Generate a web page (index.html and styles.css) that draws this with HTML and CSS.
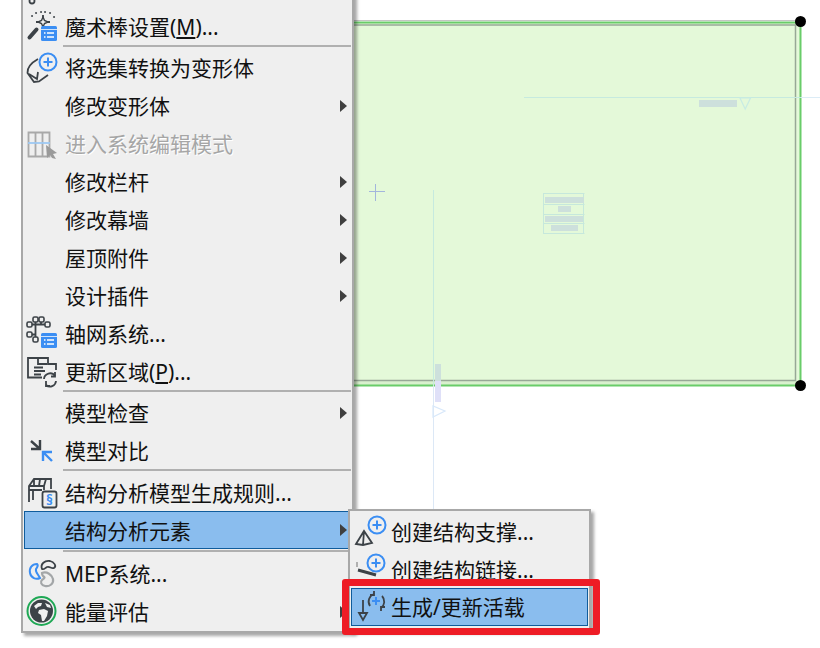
FILE: index.html
```html
<!DOCTYPE html>
<html lang="zh">
<head>
<meta charset="utf-8">
<title>结构分析元素菜单</title>
<link rel="stylesheet" href="styles.css">
</head>
<body>
<div class="stage">
  <svg class="drawing" width="820" height="648" viewBox="0 0 820 648">
    <rect x="350" y="22" width="451" height="364" fill="#e4f9d9"/>
    <rect x="350" y="381" width="446" height="5" fill="#d9f0ce"/>
    <path d="M350 25H795.500V380.500H350" fill="none" stroke="#97a896" stroke-width="1.500"/>
    <path d="M350 20.500H798" fill="none" stroke="#c4c4c4" stroke-width="1"/>
    <path d="M350 22.500H800.500V385.500H350" fill="none" stroke="#69cc69" stroke-width="2"/>
    <circle cx="800.500" cy="21.500" r="5.500" fill="#000"/>
    <circle cx="800.500" cy="385.500" r="5.500" fill="#000"/>
    <path d="M524 97.500H801" stroke="#c6eadf" stroke-width="1"/>
    <path d="M801 97.500H820" stroke="#dcecf6" stroke-width="1"/>
    <rect x="699" y="100" width="38" height="7" fill="#cde0dc"/>
    <path d="M740 98H750.500L745.200 109Z" fill="none" stroke="#c8ece3" stroke-width="1.200"/>
    <path d="M369 191.500H385M375.500 184V201" stroke="#a3b6dc" stroke-width="1"/>
    <path d="M433.500 190V386" stroke="#c6eadf" stroke-width="1"/>
    <path d="M433.500 386V510" stroke="#dce8f6" stroke-width="1"/>
    <rect x="435" y="364" width="6" height="17" fill="#cde0dc"/>
    <rect x="435" y="381" width="6" height="21" fill="#dfe0f8"/>
    <path d="M433 406V417L445 411Z" fill="none" stroke="#d8e8fa" stroke-width="1.200"/>
    <path d="M543.500 193.500H584.500M543.500 204.500H584.500M543.500 214.500H584.500M543.500 223.500H584.500M543.500 233.500H584.500M543.500 193V234M583.500 193V234" fill="none" stroke="#c6e8dc" stroke-width="1"/>
    <rect x="545" y="197" width="39" height="6" fill="#cde0dc"/>
    <rect x="558" y="206" width="13" height="6" fill="#cde0dc"/>
    <rect x="545" y="216" width="38" height="6" fill="#cde0dc"/>
    <rect x="551" y="225" width="27" height="6" fill="#cde0dc"/>
  </svg>

  <div class="menu">
    <div class="row">
      <svg class="icon" viewBox="0 0 32 32"><circle class="ln" cx="6" cy="28" r="2.500"/></svg>
    </div>
    <div class="row">
      <svg class="icon" viewBox="0 0 32 32">
        <path class="ln wand" d="M3.500 26.500L10.500 18.500"/>
        <path class="star" d="M17 6L18.500 9.500L22 11L18.500 12.500L17 16L15.500 12.500L12 11L15.500 9.500Z"/>
        <path class="ln" d="M17 4V7M17 15V18M10 11H13M21 11H24"/>
        <path class="dots" d="M6 5h.1M10 2h.1M15 1h.1M19 1h.1M24 2h.1M28 6h.1"/>
        <rect class="doc" x="15" y="15" width="16" height="15" rx="1.500"/>
        <path class="docw" d="M15 18.500H31"/>
        <path class="docl" d="M18 22h1.500M21 22h7M18 26h1.500M21 26h7"/>
      </svg>
      <span class="label">魔术棒设置(<u>M</u>)...</span>
    </div>
    <div class="sep"></div>
    <div class="row">
      <svg class="icon" viewBox="0 0 32 32">
        <path class="ln" d="M12 7C5 11 1 16 1.500 21L8 30L13 29.500L22 23M3 22L11 27L12 20"/>
        <circle class="bl" cx="22" cy="10" r="8.500"/>
        <path class="bl" d="M22 5.500V14.500M17.500 10H26.500"/>
      </svg>
      <span class="label">将选集转换为变形体</span>
    </div>
    <div class="row"><span class="icon"></span><span class="label">修改变形体</span><i class="arrow"></i></div>
    <div class="row off">
      <svg class="icon" viewBox="0 0 32 32">
        <path class="gr" d="M2.500 4.500H23.500V28.500H2.500ZM9.500 4.500V28.500M16.500 4.500V28.500"/>
        <path class="glb" d="M2 15H24"/>
        <path class="garrow" d="M20 17L31 25L27 26L30 31L26 30L24 27L21 30Z"/>
      </svg>
      <span class="label">进入系统编辑模式</span>
    </div>
    <div class="row"><span class="icon"></span><span class="label">修改栏杆</span><i class="arrow"></i></div>
    <div class="row"><span class="icon"></span><span class="label">修改幕墙</span><i class="arrow"></i></div>
    <div class="row"><span class="icon"></span><span class="label">屋顶附件</span><i class="arrow"></i></div>
    <div class="row"><span class="icon"></span><span class="label">设计插件</span><i class="arrow"></i></div>
    <div class="row">
      <svg class="icon" viewBox="0 0 32 32">
        <path class="ln" d="M5 6.500H19M9.500 0V21M5 16.500H9.500M15 2V6.500"/>
        <g class="nodes"><rect x="1" y="4" width="5" height="5" rx="1.500"/><rect x="7" y="-1" width="5" height="5" rx="1.500"/><rect x="13" y="-1" width="5" height="5" rx="1.500"/><rect x="19" y="4" width="5" height="5" rx="1.500"/><rect x="1" y="14" width="5" height="5" rx="1.500"/><rect x="7" y="19" width="5" height="5" rx="1.500"/></g>
        <rect class="doc" x="15" y="15" width="16" height="15" rx="1.500"/>
        <path class="docw" d="M15 18.500H31"/>
        <path class="docl" d="M18 22h1.500M21 22h7M18 26h1.500M21 26h7"/>
      </svg>
      <span class="label">轴网系统...</span>
    </div>
    <div class="row">
      <svg class="icon" viewBox="0 0 32 32">
        <path class="ln" d="M16 21.500H2V2H22V8H30V14"/>
        <path class="ln" d="M12 2V8H21M8 11.500H17M8 15H19M8 18.500H15"/>
        <path class="ln" d="M18 23A6 6 0 0 1 29 20M30 25A6 6 0 0 1 20 29"/>
        <path class="ln" d="M29 16V20.500H25M20 25V30H24"/>
      </svg>
      <span class="label">更新区域(<u>P</u>)...</span>
    </div>
    <div class="sep"></div>
    <div class="row"><span class="icon"></span><span class="label">模型检查</span><i class="arrow"></i></div>
    <div class="row">
      <svg class="icon" viewBox="0 0 32 32">
        <path class="ln thick" d="M5 6L14 14M5 14H14V5"/>
        <path class="bl thick" d="M17 17L26 26M17 26V17H26"/>
      </svg>
      <span class="label">模型对比</span>
    </div>
    <div class="sep"></div>
    <div class="row low">
      <svg class="icon" viewBox="0 0 32 32">
        <path class="ln" d="M3 26V10L8 3H25V13M3 10H18V14M3 14H16M7 14V24M8 3L8 10M14 3L13 10M20 3L18 10"/>
        <rect class="ln" x="16.500" y="15.500" width="14" height="16" rx="2" />
        <text class="sect" x="23.500" y="28.500">§</text>
      </svg>
      <span class="label">结构分析模型生成规则...</span>
    </div>
    <div class="row sel low"><span class="icon"></span><span class="label">结构分析元素</span><i class="arrow"></i></div>
    <div class="sep wide"></div>
    <div class="row">
      <svg class="icon" viewBox="0 0 32 32">
        <path class="bl" d="M11 6C6 6 3 10 4 15C5 20 10 22 14 20C12 16 9 14 10 11C11 9 13 8 11 6Z"/>
        <path class="ln" d="M16 11C14 6 19 2 24 3C28 4 31 8 28 10C25 11 24 8 21 9C19 10 18 12 16 11Z"/>
        <path class="gy" d="M16 15C21 13 26 17 27 21C28 26 23 29 19 28C15 27 14 24 16 22C18 20 20 20 17 18C16 17 16 16 16 15Z"/>
      </svg>
      <span class="label">MEP系统...</span>
    </div>
    <div class="row">
      <svg class="icon" viewBox="0 0 32 32">
        <circle cx="15.500" cy="15" r="14" class="ring"/>
        <circle cx="15.500" cy="15" r="11.500" class="disc"/>
        <path class="land" d="M8 10L12 7L16 7L15 10L12 11L10 13ZM13 14L18 13L22 15L21 20L18 25L16 25L15 19L12 17ZM19 7L24 9L25 12L21 11Z"/>
      </svg>
      <span class="label">能量评估</span><i class="arrow"></i>
    </div>
  </div>

  <div class="submenu">
    <div class="row">
      <svg class="icon" viewBox="0 0 32 32">
        <path class="ln" d="M2 28L10 15L18 27L9 29ZM10 15L9 29"/>
        <circle class="bl" cx="23" cy="9" r="8.500"/>
        <path class="bl" d="M23 4.500V13.500M18.500 9H27.500"/>
      </svg>
      <span class="label">创建结构支撑...</span>
    </div>
    <div class="row">
      <svg class="icon" viewBox="0 0 32 32">
        <path class="gr" d="M3 8V13"/>
        <path class="ln heavy" d="M4 16L22 21"/>
        <circle class="bl" cx="22" cy="9" r="8.500"/>
        <path class="bl" d="M22 4.500V13.500M17.500 9H26.500"/>
      </svg>
      <span class="label">创建结构链接...</span>
    </div>
    <div class="row sel lift">
      <svg class="icon" viewBox="0 0 32 32">
        <path class="ln" d="M9 9V22M5 22H13L9 29Z"/>
        <path class="ln" d="M16 15A8 8 0 0 1 20 3M28 5A8 8 0 0 1 27 17"/>
        <path class="ln" d="M20 0V4H16M27 20V16H31"/>
        <path class="bl" d="M22 6V14M18 10H26"/>
      </svg>
      <span class="label">生成/更新活载</span>
    </div>
  </div>

  <div class="callout"></div>
</div>
</body>
</html>
```

FILE: styles.css
```css
html, body {
  margin: 0;
  padding: 0;
  background: #fff;
}

.stage {
  position: relative;
  width: 820px;
  height: 648px;
  overflow: hidden;
  font-family: "Noto Sans", "Noto Sans CJK SC", sans-serif;
  font-size: 21px;
  color: #111;
}

.drawing {
  position: absolute;
  left: 0;
  top: 0;
}

.menu,
.submenu {
  position: absolute;
  box-sizing: border-box;
  background: #efefef;
  border: 2px solid #a8a8a8;
  box-shadow: 3px 3px 3px rgba(0, 0, 0, 0.35);
}

.menu {
  left: 21px;
  top: -32px;
  width: 333px;
}

.submenu {
  left: 348px;
  top: 509px;
  width: 243px;
  height: 122px;
  padding-top: 2px;
}

.row {
  display: flex;
  align-items: center;
  box-sizing: border-box;
  height: 38px;
  margin-left: 1px;
  padding: 0 5px 0 2px;
  white-space: nowrap;
}

.submenu .row {
  margin: 0 1px;
  padding-left: 3px;
}

.submenu .icon {
  margin-right: 5px;
}

.submenu .lift {
  margin-top: -1px;
}

.low .label {
  margin-top: 2px;
}

.icon {
  display: block;
  flex: none;
  width: 32px;
  height: 32px;
  margin-right: 7px;
  overflow: visible;
}

.label {
  line-height: 38px;
}

.arrow {
  width: 0;
  height: 0;
  margin-left: auto;
  border-left: 7px solid #3f3f3f;
  border-top: 6.500px solid transparent;
  border-bottom: 6.500px solid transparent;
}

.sel {
  background: #8abdee;
  box-shadow: inset 0 0 0 1px #0f5c9c;
}

.off .label {
  color: #a6a6a6;
  text-shadow: 1px 1px 0 #fff;
}

.sep {
  height: 2px;
  margin: -1px 1px 2px 40px;
  background: #b0b0b0;
}

.sep.wide {
  margin: 1px 1px 3px 40px;
}

.callout {
  position: absolute;
  left: 342px;
  top: 579px;
  box-sizing: border-box;
  width: 258px;
  height: 56px;
  border: 7px solid #ee1c25;
  border-radius: 3px;
}

.ln,
.bl,
.gr,
.glb,
.gy {
  fill: none;
  stroke-width: 1.800;
}

.ln {
  stroke: #3c4247;
}

.bl {
  stroke: #3b8ef3;
  stroke-width: 2;
}

.thick {
  stroke-width: 2.400;
}

.heavy {
  stroke-width: 3;
}

.wand {
  stroke-width: 4;
  stroke-linecap: round;
}

.star {
  fill: #efefef;
  stroke: #3c4247;
  stroke-width: 1.400;
}

.gr {
  stroke: #a9a9a9;
}

.glb {
  stroke: #9cc8f2;
}

.gy {
  stroke: #a3a6a8;
  stroke-width: 2.200;
}

.garrow {
  fill: #9a9a9a;
}

.dots {
  fill: none;
  stroke: #4a5055;
  stroke-width: 2;
  stroke-linecap: round;
}

.doc {
  fill: #3b8ef3;
}

.docw {
  stroke: #cfe3fb;
  stroke-width: 1;
}

.docl {
  fill: none;
  stroke: #fff;
  stroke-width: 1.600;
}

.nodes rect {
  fill: #efefef;
  stroke: #3c4247;
  stroke-width: 1.600;
}

.sect {
  font-family: "Noto Sans", sans-serif;
  font-size: 14px;
  font-weight: 700;
  fill: #3b8ef3;
  text-anchor: middle;
}

.ring {
  fill: #efefef;
  stroke: #1fa855;
  stroke-width: 2;
}

.disc {
  fill: #3d4348;
}

.land {
  fill: #efefef;
}
```
